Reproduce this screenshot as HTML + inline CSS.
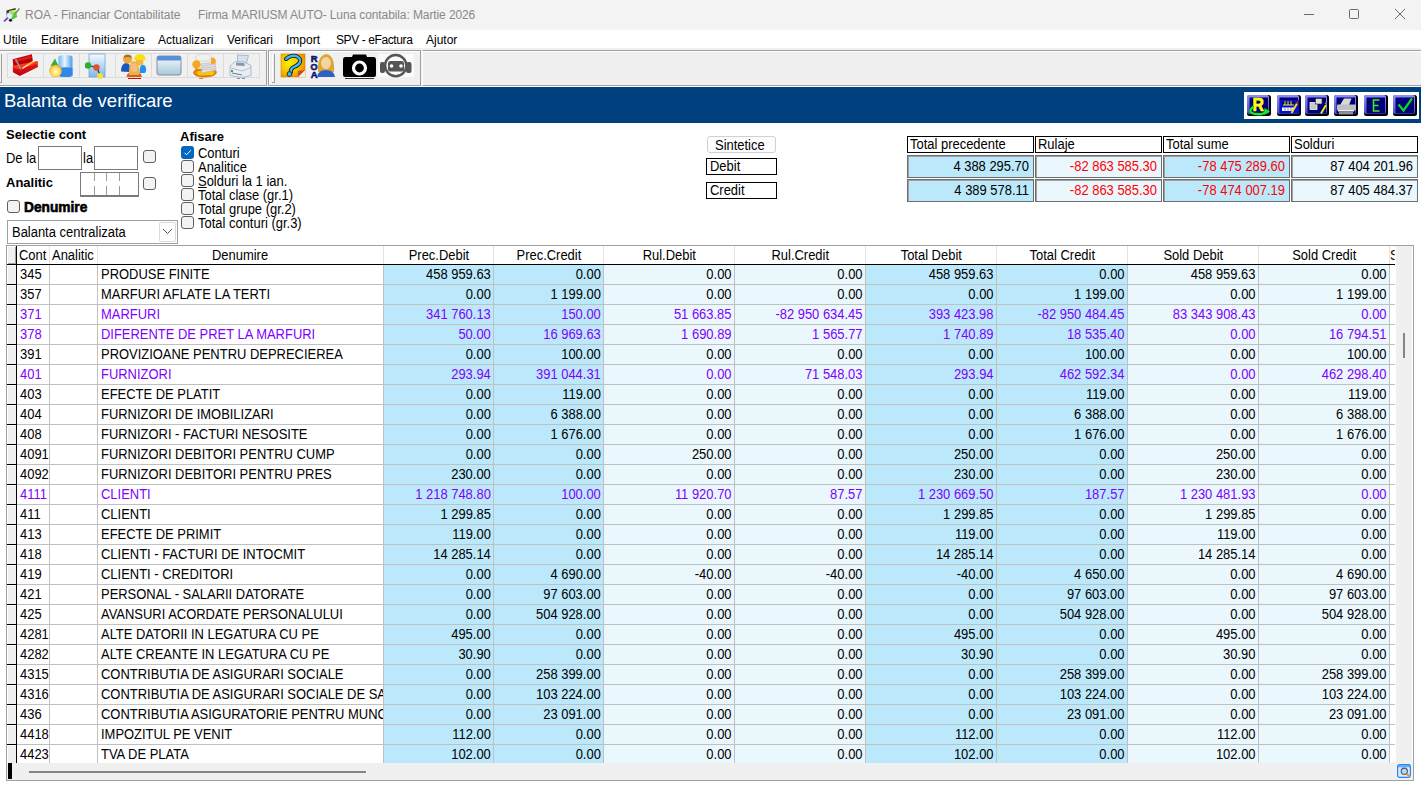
<!DOCTYPE html>
<html><head><meta charset="utf-8"><style>
*{margin:0;padding:0;box-sizing:border-box}
html,body{width:1421px;height:789px;overflow:hidden;background:#fff;font-family:"Liberation Sans",sans-serif;font-size:13px;color:#000}
.a{position:absolute}
.t{position:absolute;white-space:nowrap;line-height:16px}
.s14{font-size:14px;transform:scaleX(0.925);transform-origin:0 0}
.s14r{font-size:14px;transform:scaleX(0.925);transform-origin:100% 0}
.cell{position:absolute;white-space:nowrap;overflow:hidden;height:19px;line-height:19px}
.r{text-align:right;padding-right:2px}
.l{padding-left:3px}
.p{color:#8000ff}
.sc{position:absolute;white-space:nowrap;overflow:hidden;font-size:14px;transform:scaleX(0.925)}
.hd{position:absolute;height:18px;line-height:20px;text-align:center;white-space:nowrap;overflow:hidden}
.cb{position:absolute;width:13px;height:13px;border:1px solid #5f5f5f;border-radius:3px;background:#f3f3f3}
</style></head><body>

<div class="a" style="left:0;top:0;width:1421px;height:30px;background:#f3f3f3"></div>
<svg class="a" style="left:0;top:0" width="24" height="30" viewBox="0 0 24 30">
<defs><linearGradient id="tig" x1="0" y1="0" x2="0" y2="1"><stop offset="0" stop-color="#e8f870"/><stop offset="0.5" stop-color="#60e020"/><stop offset="1" stop-color="#20c020"/></linearGradient></defs>
<path d="M6.5 10.5 L15.5 8 L16 10 L9 11.5 L8.5 17 L6.5 15 Z" fill="#333"/>
<path d="M9 11 L16 9.5 L17.2 17 L12 19.5 L9 17 Z" fill="url(#tig)"/>
<path d="M14.5 14.5 L19.5 8.5" stroke="#808080" stroke-width="1.4"/>
<ellipse cx="10.5" cy="20.3" rx="1.6" ry="1.4" fill="#111"/>
<circle cx="9.5" cy="15.8" r="3" fill="#e8f0ff" stroke="#a8b8d8" stroke-width="0.7"/>
<path d="M4.5 20.8 L7.3 18.3" stroke="#7040c0" stroke-width="1.8" stroke-linecap="round"/>
</svg>
<div class="t" style="left:25px;top:7px;font-size:12px;color:#898989">ROA - Financiar Contabilitate</div>
<div class="t" style="left:198px;top:7px;font-size:12px;color:#898989;letter-spacing:-0.1px">Firma MARIUSM AUTO- Luna contabila: Martie 2026</div>
<div class="a" style="left:1304px;top:14px;width:10px;height:1px;background:#6a6a6a"></div>
<div class="a" style="left:1349px;top:9px;width:10px;height:10px;border:1px solid #6a6a6a;border-radius:1.5px"></div>
<svg class="a" style="left:1394px;top:8px" width="13" height="13" viewBox="0 0 13 13"><path d="M1 1 L11 11 M11 1 L1 11" stroke="#6a6a6a" stroke-width="1"/></svg>
<div class="t" style="left:3px;top:32px;font-size:12px;letter-spacing:0">Utile</div>
<div class="t" style="left:41px;top:32px;font-size:12px;letter-spacing:0">Editare</div>
<div class="t" style="left:91px;top:32px;font-size:12px;letter-spacing:0">Initializare</div>
<div class="t" style="left:158px;top:32px;font-size:12px;letter-spacing:0">Actualizari</div>
<div class="t" style="left:227px;top:32px;font-size:12px;letter-spacing:0">Verificari</div>
<div class="t" style="left:286px;top:32px;font-size:12px;letter-spacing:0">Import</div>
<div class="t" style="left:336px;top:32px;font-size:12px;letter-spacing:-0.4px">SPV - eFactura</div>
<div class="t" style="left:426px;top:32px;font-size:12px;letter-spacing:0">Ajutor</div>
<div class="a" style="left:0;top:48px;width:1421px;height:39px;background:#f0f0f0"></div>
<div class="a" style="left:-2px;top:50px;width:269px;height:36px;border:1px solid #a0a0a0;box-shadow:inset 1px 1px 0 #fff"></div>
<div class="a" style="left:268px;top:50px;width:153px;height:36px;border:1px solid #a0a0a0;box-shadow:inset 1px 1px 0 #fff"></div>
<div class="a" style="left:422px;top:50px;width:1010px;height:36px;border:1px solid #a0a0a0;border-left:1px solid #fff;box-shadow:inset 0 1px 0 #fff"></div>
<div class="a" style="left:0px;top:54px;width:2px;height:29px;border-right:1px solid #a0a0a0;border-bottom:1px solid #a0a0a0"></div>
<div class="a" style="left:272px;top:54px;width:3px;height:29px;border-right:1px solid #a0a0a0;border-bottom:1px solid #a0a0a0;box-shadow:inset 1px 0 0 #fff"></div>
<div class="a" style="left:7px;top:53px;width:37px;height:25px;border:1px solid #dcdcdc"></div>
<div class="a" style="left:43px;top:53px;width:37px;height:25px;border:1px solid #dcdcdc"></div>
<div class="a" style="left:79px;top:53px;width:37px;height:25px;border:1px solid #dcdcdc"></div>
<div class="a" style="left:115px;top:53px;width:37px;height:25px;border:1px solid #dcdcdc"></div>
<div class="a" style="left:151px;top:53px;width:37px;height:25px;border:1px solid #dcdcdc"></div>
<div class="a" style="left:187px;top:53px;width:37px;height:25px;border:1px solid #dcdcdc"></div>
<div class="a" style="left:223px;top:53px;width:37px;height:25px;border:1px solid #dcdcdc"></div>
<div class="a" style="left:0;top:86px;width:1421px;height:1px;background:#fff"></div>
<svg class="a" style="left:0;top:48px" width="421" height="38" viewBox="0 48 421 38">
<defs>
<linearGradient id="tbred" x1="0" y1="0" x2="0" y2="1"><stop offset="0" stop-color="#e8201c"/><stop offset="1" stop-color="#c00010"/></linearGradient>
<linearGradient id="cyl" x1="0" y1="0" x2="1" y2="0"><stop offset="0" stop-color="#6fb4f4"/><stop offset="0.45" stop-color="#e8f6ff"/><stop offset="1" stop-color="#4a9de8"/></linearGradient>
<radialGradient id="sph" cx="0.5" cy="0.55" r="0.55"><stop offset="0" stop-color="#fffbd0"/><stop offset="0.6" stop-color="#ffe060"/><stop offset="1" stop-color="#f59a20"/></radialGradient>
<linearGradient id="doc" x1="0" y1="0" x2="0" y2="1"><stop offset="0" stop-color="#f4fbff"/><stop offset="1" stop-color="#7db8ea"/></linearGradient>
<linearGradient id="win" x1="0" y1="0" x2="0" y2="1"><stop offset="0" stop-color="#f4fbff"/><stop offset="1" stop-color="#a8c8d8"/></linearGradient>
<radialGradient id="qbg" cx="0.35" cy="0.4" r="0.75"><stop offset="0" stop-color="#f8f000"/><stop offset="0.55" stop-color="#f6c000"/><stop offset="1" stop-color="#e88000"/></radialGradient>
</defs>
<!-- toolbox -->
<path d="M12.7 59.2 L31.9 54.2 L33 62 L13.4 67.4 Z" fill="#b8000a"/>
<path d="M14 60 L31 55.5 L31.8 58 L14.5 62.5 Z" fill="#e01818"/>
<path d="M12.9 65.8 L37.5 61.3 L38 66.9 L19.8 75.9 L12.9 72.2 Z" fill="url(#tbred)"/>
<path d="M12.9 65.8 L37.5 61.3 L37.8 63.5 L19 69 L13 68 Z" fill="#ff3a1a"/>
<path d="M15.6 59.2 L20.8 69.5" stroke="#9a9a9a" stroke-width="1.5"/>
<path d="M22.4 68.5 L36.7 59" stroke="#f4f4f4" stroke-width="1.4"/>
<path d="M27.7 65.3 L33 62.1" stroke="#f0b800" stroke-width="1.6"/>
<!-- shapes -->
<path d="M58.5 57 Q58.5 55 65.5 55 Q72.5 55 72.5 57 L72.5 75.5 Q71 77 65.5 77 Q60 77 58.5 75.5 Z" fill="url(#cyl)"/>
<path d="M58.5 68 Q65.5 66.5 72.5 68 L72.5 75.5 Q71 77 65.5 77 Q60 77 58.5 75.5 Z" fill="#2f88e8"/>
<path d="M50.5 66 L55 58.5 L58.5 66 Z" fill="#30b030"/>
<circle cx="55.5" cy="71" r="6.3" fill="url(#sph)"/>
<!-- molecule doc -->
<rect x="89" y="54" width="16" height="23" fill="url(#doc)" stroke="#6aa8e0" stroke-width="0.8"/>
<line x1="88" y1="65" x2="97" y2="68" stroke="#333" stroke-width="1.2"/>
<line x1="97" y1="68" x2="100" y2="75" stroke="#333" stroke-width="1.2"/>
<circle cx="88" cy="65.5" r="3.2" fill="#2cb02c"/>
<circle cx="96.5" cy="67.5" r="3.2" fill="#e0502c"/>
<circle cx="100" cy="76" r="3" fill="#f0e040"/>
<!-- people -->
<path d="M121 71.5 Q121 63.5 126 63 Q130 63 130 68 L129 72 Z" fill="#1a58c0"/>
<path d="M139.5 73 Q139 65 143 64.8 Q146.5 65 146 71 L145 73 Z" fill="#2290f0"/>
<circle cx="127.6" cy="59" r="4.6" fill="#f0a830"/>
<path d="M124 56 Q127 53.5 131.5 56 L131 58 Q128 56 124 58 Z" fill="#a07030"/>
<circle cx="139.7" cy="62" r="3.8" fill="#f4b840"/>
<path d="M134 60 Q134 54.2 139.8 54.2 Q145.8 54.2 145.8 60 Z" fill="#f8e010"/>
<path d="M126.5 77 Q127 71.5 134 71.5 Q141 71.5 142 77 Z" fill="#e05a10"/>
<path d="M129 75 Q128.5 61.3 134 61.3 Q139.5 61.3 139.2 75 Z" fill="#e8b050"/>
<ellipse cx="134" cy="67.5" rx="3.5" ry="4.5" fill="#f7c070"/>
<rect x="128" y="78" width="13" height="1" fill="#c01010"/>
<!-- window -->
<rect x="157" y="56" width="24" height="19" rx="2" fill="url(#win)" stroke="#707888" stroke-width="0.8"/>
<rect x="157" y="56" width="24" height="4.5" rx="1.5" fill="#5b8ed8"/>
<!-- fax/money -->
<path d="M193 73 Q194 68 203 69 Q215 68 217 72 Q216 77 205 77.5 Q195 77.5 193 73 Z" fill="#e07a18"/>
<path d="M195 72 Q204 69.5 215 71.5 L213 75 L199 75.5 Z" fill="#f8c800"/>
<path d="M201 64 L215 62 L216 70 L202 73 Z" fill="#e4e4e4" stroke="#a8a8a8" stroke-width="0.5"/>
<path d="M202 66 L215 64 M202 68 L215 66.5 M202 70 L215 68.5" stroke="#b0b0b0" stroke-width="0.6"/>
<path d="M195 57 Q198 53 205 54 Q211 53 211 57 L209 61 L197 61 Z" fill="#f0f0f0" stroke="#c8c8c8" stroke-width="0.6"/>
<circle cx="196.5" cy="64.5" r="4.2" fill="#f8a820"/>
<path d="M196 68 L197 73" stroke="#d89000" stroke-width="1.5"/>
<path d="M211 58 A3.2 3.2 0 0 1 214 64 L211 64 Z" fill="#f8a820"/>
<rect x="199" y="78" width="4" height="1" fill="#e08030"/>
<!-- printer -->
<path d="M237.5 55 L248.5 55.5 L246.5 63 L237.5 63 Z" fill="#d4e2f0" stroke="#8a9ab4" stroke-width="0.6"/>
<path d="M230 66 L235.5 61.5 L244 62 L251 65.5 L251 75.5 L241.5 77.5 L230 75.5 Z" fill="#e8eef4" stroke="#98a4bc" stroke-width="0.7"/>
<path d="M236 62.5 L244 63 L245 66 L236 65.5 Z" fill="#8a96a8"/>
<path d="M231 68 L242 71 L251 67.5" stroke="#a0aabb" stroke-width="0.7" fill="none"/>
<path d="M232 73 L242 75" stroke="#707a88" stroke-width="1"/>
<rect x="231" y="70" width="2" height="2" fill="#20c020"/>
<rect x="237" y="78" width="3" height="1" fill="#8090b0"/><rect x="242" y="78" width="3" height="1" fill="#8090b0"/>
<!-- group2 ? -->
<rect x="281" y="54" width="24" height="23" fill="url(#qbg)" stroke="#d88000" stroke-width="0.6"/>
<path d="M298 77 L305 70 L305 77 Z" fill="#f0f0f0"/>
<path d="M298 77 L298 71 L305 70 Z" fill="#c0502a"/>
<path d="M286 59 Q290 55 296 56 Q301 58 300 62 Q299 65 294 67 Q290 69 291 72" stroke="#111" stroke-width="4" fill="none" stroke-linecap="round"/>
<path d="M286 59 Q290 55 296 56 Q301 58 300 62 Q299 65 294 67 Q290 69 291 72" stroke="#3cb8f8" stroke-width="2.4" fill="none" stroke-linecap="round"/>
<circle cx="289.5" cy="74" r="2.4" fill="#3cb8f8" stroke="#111" stroke-width="0.8"/>
<!-- ROA person -->
<text x="0" y="0" font-family="Liberation Sans" font-weight="bold" font-size="10" fill="#0a1470" stroke="#0a1470" stroke-width="0.6" transform="translate(310.8 61.5) scale(0.95 0.9)">R</text>
<text x="0" y="0" font-family="Liberation Sans" font-weight="bold" font-size="10" fill="#0a1470" stroke="#0a1470" stroke-width="0.6" transform="translate(310.5 69.5) scale(0.9 0.9)">O</text>
<text x="0" y="0" font-family="Liberation Sans" font-weight="bold" font-size="10" fill="#0a1470" stroke="#0a1470" stroke-width="0.6" transform="translate(310.8 77.5) scale(0.95 0.9)">A</text>
<path d="M318 72 Q317 56 326 54 Q335 55 334 72 Z" fill="#d8a830"/>
<ellipse cx="326" cy="63" rx="5" ry="6" fill="#f4d4a4"/>
<path d="M317 77 Q318 70 326 70 Q334 70 335 77 Z" fill="#2f60c8"/>
<!-- camera -->
<path d="M352 57 L353 54.5 L366 54.5 L367 57 L374 57 Q376 57 376 59.5 L376 75 Q376 77 374 77 L345 77 Q343 77 343 75 L343 59.5 Q343 57 345 57 Z" fill="#000"/>
<circle cx="359.5" cy="68" r="6" fill="none" stroke="#fff" stroke-width="3.2"/>
<rect x="345" y="78" width="29" height="1" fill="#333"/>
<!-- robot -->
<rect x="378" y="54" width="36" height="23" fill="#fafafa"/>
<circle cx="395.7" cy="65.6" r="10.6" fill="none" stroke="#555" stroke-width="2.4"/>
<rect x="380" y="62" width="5" height="11" rx="2" fill="#555"/>
<rect x="406" y="62" width="5.5" height="11" rx="2" fill="#555"/>
<rect x="388" y="61" width="16" height="10.5" rx="2.5" fill="#555"/>
<circle cx="391.5" cy="66" r="1.8" fill="#fff"/>
<circle cx="401" cy="66" r="1.8" fill="#fff"/>
</svg>

<div class="a" style="left:0;top:87px;width:1421px;height:36px;background:#00407f"></div>
<div class="t" style="left:4px;top:90px;font-size:18.5px;line-height:22px;color:#fff">Balanta de verificare</div>
<div class="a" style="left:1244px;top:92px;width:175px;height:27px;background:#fff"></div>
<svg class="a" style="left:1244px;top:92px" width="175" height="27" viewBox="1244 92 175 27">
<defs>
<linearGradient id="hbv" x1="0" y1="0" x2="0" y2="1"><stop offset="0" stop-color="#9090f0"/><stop offset="1" stop-color="#5050c8"/></linearGradient>
</defs>
<g id="hbtns"></g>
<rect x="1247" y="95" width="24" height="21" rx="2.5" fill="#000"/>
<rect x="1247" y="95" width="22" height="19" rx="2" fill="url(#hbv)"/>
<rect x="1249.5" y="97.5" width="18.5" height="16" fill="#000078"/>
<rect x="1277" y="95" width="24" height="21" rx="2.5" fill="#000"/>
<rect x="1277" y="95" width="22" height="19" rx="2" fill="url(#hbv)"/>
<rect x="1279.5" y="97.5" width="18.5" height="16" fill="#000078"/>
<rect x="1305" y="95" width="24" height="21" rx="2.5" fill="#000"/>
<rect x="1305" y="95" width="22" height="19" rx="2" fill="url(#hbv)"/>
<rect x="1307.5" y="97.5" width="18.5" height="16" fill="#000078"/>
<rect x="1334" y="95" width="24" height="21" rx="2.5" fill="#000"/>
<rect x="1334" y="95" width="22" height="19" rx="2" fill="url(#hbv)"/>
<rect x="1336.5" y="97.5" width="18.5" height="16" fill="#000078"/>
<rect x="1364" y="95" width="24" height="21" rx="2.5" fill="#000"/>
<rect x="1364" y="95" width="22" height="19" rx="2" fill="url(#hbv)"/>
<rect x="1366.5" y="97.5" width="18.5" height="16" fill="#000078"/>
<rect x="1393" y="95" width="24" height="21" rx="2.5" fill="#000"/>
<rect x="1393" y="95" width="22" height="19" rx="2" fill="url(#hbv)"/>
<rect x="1395.5" y="97.5" width="18.5" height="16" fill="#000078"/>

<!-- R -->
<text x="0" y="0" font-family="Liberation Sans" font-weight="bold" font-size="18" fill="#ffff00" stroke="#ffff00" stroke-width="0.7" transform="translate(1252.5 110.8) scale(0.88 0.97)">R</text>
<path d="M1254 106.5 Q1249 109.5 1251 112.5 Q1255 115 1262 114 Q1265.5 113.2 1266.5 111.5" stroke="#10f020" stroke-width="2.4" fill="none"/>
<path d="M1264.5 108 L1270 111.5 L1264 115 Z" fill="#10f020"/>
<!-- grid edit -->
<rect x="1280" y="100" width="19" height="13" fill="#0010e0"/>
<rect x="1282" y="101" width="13" height="5" fill="#101040"/>
<path d="M1283 105 L1294 105 M1285 101 L1285 105 M1288 101 L1288 105 M1291 101 L1291 105" stroke="#f8f0b0" stroke-width="0.9"/>
<rect x="1282" y="107.5" width="12" height="3.5" fill="#fff"/>
<path d="M1285 107.5 L1285 111 M1288 107.5 L1288 111 M1291 107.5 L1291 111" stroke="#806020" stroke-width="0.7"/>
<path d="M1291.5 113 L1297 103.5" stroke="#f0e020" stroke-width="2"/>
<path d="M1296.5 103.5 L1298 101.5" stroke="#e01010" stroke-width="1.5"/>
<!-- windows edit -->
<rect x="1310" y="102.5" width="7" height="7" fill="#c8c8c8" stroke="#f0f0f0" stroke-width="0.8"/>
<rect x="1315.5" y="98.5" width="6.5" height="5.5" fill="#e0e0e0" stroke="#222" stroke-width="0.6"/>
<path d="M1321 113.5 L1326 105" stroke="#f0e800" stroke-width="2"/>
<path d="M1325 104 L1327 101" stroke="#b0b0b0" stroke-width="0.8"/>
<!-- printer -->
<path d="M1340 105 L1344 98.5 L1351.5 98.5 L1349 105 Z" fill="#d8d8d8"/>
<rect x="1337" y="104.5" width="19" height="6" rx="1" fill="#c0c0c0"/>
<rect x="1338" y="110" width="16" height="1.5" fill="#f0f0f0"/>
<rect x="1339" y="111.5" width="14" height="3" fill="#909090"/>
<!-- E -->
<path d="M1379.5 100 L1373.5 100 L1373.5 111 L1379.5 111 M1373.5 105.5 L1378.5 105.5" stroke="#40f010" stroke-width="1.6" fill="none"/>
<!-- check -->
<path d="M1398.5 104.5 L1403.5 110.5 L1412 98.5" stroke="#00e020" stroke-width="2.2" fill="none"/>
</svg>

<div class="t" style="left:6px;top:127px;font-weight:bold">Selectie cont</div>
<div class="t s14" style="left:6px;top:150px">De la</div>
<div class="a" style="left:38px;top:146px;width:44px;height:24px;border:1px solid #7a7a7a;background:#fff"></div>
<div class="t s14" style="left:83px;top:150px">la</div>
<div class="a" style="left:94px;top:146px;width:44px;height:24px;border:1px solid #7a7a7a;background:#fff"></div>
<div class="cb" style="left:143px;top:150px"></div>
<div class="t" style="left:6px;top:175px;font-weight:bold">Analitic</div>
<div class="a" style="left:80px;top:172px;width:59px;height:25px;border:1px solid #7a7a7a;border-bottom:2px solid #7a7a7a;background:#fff"></div>
<div class="a" style="left:94px;top:173px;width:1px;height:8px;background:#9a9a9a"></div>
<div class="a" style="left:94px;top:186px;width:1px;height:9px;background:#9a9a9a"></div>
<div class="a" style="left:106px;top:173px;width:1px;height:8px;background:#9a9a9a"></div>
<div class="a" style="left:106px;top:186px;width:1px;height:9px;background:#9a9a9a"></div>
<div class="a" style="left:119px;top:173px;width:1px;height:8px;background:#9a9a9a"></div>
<div class="a" style="left:119px;top:186px;width:1px;height:9px;background:#9a9a9a"></div>
<div class="cb" style="left:143px;top:177px"></div>
<div class="cb" style="left:7px;top:200px"></div>
<div class="t" style="left:24px;top:199px;font-weight:bold;font-size:14px;-webkit-text-stroke:0.6px #000;transform:scaleX(0.98);transform-origin:0 0">Denumire</div>
<div class="a" style="left:7px;top:220px;width:171px;height:24px;border:1px solid #a0a0a0;background:#fff"></div>
<div class="t s14" style="left:12px;top:224px">Balanta centralizata</div>
<div class="a" style="left:159px;top:222px;width:17px;height:20px;border:1px solid #dadada;border-radius:2px;background:#fff"></div>
<svg class="a" style="left:162px;top:228px" width="11" height="7" viewBox="0 0 11 7"><path d="M1 1 L5.5 5.5 L10 1" stroke="#555" fill="none" stroke-width="1"/></svg>
<div class="t" style="left:180px;top:129px;font-weight:bold">Afisare</div>
<div class="a" style="left:181px;top:146px;width:13px;height:13px;background:#0067c0;border-radius:3px"></div>
<svg class="a" style="left:181px;top:146px" width="13" height="13" viewBox="0 0 13 13"><path d="M3.5 6.8 L5.5 8.8 L9.8 4.3" stroke="#fff" fill="none" stroke-width="1"/></svg>
<div class="t s14" style="left:198px;top:145px">Conturi</div>
<div class="cb" style="left:181px;top:160px"></div>
<div class="t s14" style="left:198px;top:159px">Analitice</div>
<div class="cb" style="left:181px;top:174px"></div>
<div class="t s14" style="left:198px;top:173px"><u>S</u>olduri la 1 ian.</div>
<div class="cb" style="left:181px;top:188px"></div>
<div class="t s14" style="left:198px;top:187px">Total clase (gr.1)</div>
<div class="cb" style="left:181px;top:202px"></div>
<div class="t s14" style="left:198px;top:201px">Total grupe (gr.2)</div>
<div class="cb" style="left:181px;top:216px"></div>
<div class="t s14" style="left:198px;top:215px">Total conturi (gr.3)</div>
<div class="a" style="left:707px;top:136px;width:69px;height:17px;border:1px solid #d0d0d0;border-radius:3px;background:#fdfdfd"></div>
<div class="t s14" style="left:715px;top:137px">Sintetice</div>
<div class="a" style="left:706px;top:158px;width:71px;height:17px;border:1px solid #000"></div>
<div class="t s14" style="left:710px;top:158px">Debit</div>
<div class="a" style="left:706px;top:182px;width:71px;height:17px;border:1px solid #000"></div>
<div class="t s14" style="left:710px;top:182px">Credit</div>
<div class="a" style="left:907px;top:136px;width:127px;height:17px;border:1px solid #000;background:#fff"></div>
<div class="t s14" style="left:910px;top:136px">Total precedente</div>
<div class="a" style="left:907px;top:155px;width:127px;height:23px;border:1px solid #6e6e6e;background:#bbe9fb;box-shadow:inset 1px 1px 0 #a0a0a0"></div>
<div class="t s14r" style="left:907px;top:158px;width:122px;text-align:right;color:#000">4 388 295.70</div>
<div class="a" style="left:907px;top:179px;width:127px;height:23px;border:1px solid #6e6e6e;background:#bbe9fb;box-shadow:inset 1px 1px 0 #a0a0a0"></div>
<div class="t s14r" style="left:907px;top:182px;width:122px;text-align:right;color:#000">4 389 578.11</div>
<div class="a" style="left:1035px;top:136px;width:127px;height:17px;border:1px solid #000;background:#fff"></div>
<div class="t s14" style="left:1038px;top:136px">Rulaje</div>
<div class="a" style="left:1035px;top:155px;width:127px;height:23px;border:1px solid #6e6e6e;background:#eaf8fe;box-shadow:inset 1px 1px 0 #a0a0a0"></div>
<div class="t s14r" style="left:1035px;top:158px;width:122px;text-align:right;color:#f00">-82 863 585.30</div>
<div class="a" style="left:1035px;top:179px;width:127px;height:23px;border:1px solid #6e6e6e;background:#eaf8fe;box-shadow:inset 1px 1px 0 #a0a0a0"></div>
<div class="t s14r" style="left:1035px;top:182px;width:122px;text-align:right;color:#f00">-82 863 585.30</div>
<div class="a" style="left:1163px;top:136px;width:127px;height:17px;border:1px solid #000;background:#fff"></div>
<div class="t s14" style="left:1166px;top:136px">Total sume</div>
<div class="a" style="left:1163px;top:155px;width:127px;height:23px;border:1px solid #6e6e6e;background:#bbe9fb;box-shadow:inset 1px 1px 0 #a0a0a0"></div>
<div class="t s14r" style="left:1163px;top:158px;width:122px;text-align:right;color:#f00">-78 475 289.60</div>
<div class="a" style="left:1163px;top:179px;width:127px;height:23px;border:1px solid #6e6e6e;background:#bbe9fb;box-shadow:inset 1px 1px 0 #a0a0a0"></div>
<div class="t s14r" style="left:1163px;top:182px;width:122px;text-align:right;color:#f00">-78 474 007.19</div>
<div class="a" style="left:1291px;top:136px;width:127px;height:17px;border:1px solid #000;background:#fff"></div>
<div class="t s14" style="left:1294px;top:136px">Solduri</div>
<div class="a" style="left:1291px;top:155px;width:127px;height:23px;border:1px solid #6e6e6e;background:#eaf8fe;box-shadow:inset 1px 1px 0 #a0a0a0"></div>
<div class="t s14r" style="left:1291px;top:158px;width:122px;text-align:right;color:#000">87 404 201.96</div>
<div class="a" style="left:1291px;top:179px;width:127px;height:23px;border:1px solid #6e6e6e;background:#eaf8fe;box-shadow:inset 1px 1px 0 #a0a0a0"></div>
<div class="t s14r" style="left:1291px;top:182px;width:122px;text-align:right;color:#000">87 405 484.37</div>
<div class="a" style="left:6px;top:245px;width:1408px;height:536px;border:1px solid #a0a0a0;background:#fff"></div>
<div class="a" style="left:384px;top:265px;width:109px;height:498px;background:#bbe9fb"></div>
<div class="a" style="left:494px;top:265px;width:109px;height:498px;background:#bbe9fb"></div>
<div class="a" style="left:604px;top:265px;width:130px;height:498px;background:#eaf8fe"></div>
<div class="a" style="left:735px;top:265px;width:130px;height:498px;background:#eaf8fe"></div>
<div class="a" style="left:866px;top:265px;width:130px;height:498px;background:#bbe9fb"></div>
<div class="a" style="left:997px;top:265px;width:130px;height:498px;background:#bbe9fb"></div>
<div class="a" style="left:1128px;top:265px;width:130px;height:498px;background:#eaf8fe"></div>
<div class="a" style="left:1259px;top:265px;width:130px;height:498px;background:#eaf8fe"></div>
<div class="a" style="left:17px;top:284px;width:1378px;height:1px;background:#c0c0c0"></div>
<div class="a" style="left:17px;top:304px;width:1378px;height:1px;background:#c0c0c0"></div>
<div class="a" style="left:17px;top:324px;width:1378px;height:1px;background:#c0c0c0"></div>
<div class="a" style="left:17px;top:344px;width:1378px;height:1px;background:#c0c0c0"></div>
<div class="a" style="left:17px;top:364px;width:1378px;height:1px;background:#c0c0c0"></div>
<div class="a" style="left:17px;top:384px;width:1378px;height:1px;background:#c0c0c0"></div>
<div class="a" style="left:17px;top:404px;width:1378px;height:1px;background:#c0c0c0"></div>
<div class="a" style="left:17px;top:424px;width:1378px;height:1px;background:#c0c0c0"></div>
<div class="a" style="left:17px;top:444px;width:1378px;height:1px;background:#c0c0c0"></div>
<div class="a" style="left:17px;top:464px;width:1378px;height:1px;background:#c0c0c0"></div>
<div class="a" style="left:17px;top:484px;width:1378px;height:1px;background:#c0c0c0"></div>
<div class="a" style="left:17px;top:504px;width:1378px;height:1px;background:#c0c0c0"></div>
<div class="a" style="left:17px;top:524px;width:1378px;height:1px;background:#c0c0c0"></div>
<div class="a" style="left:17px;top:544px;width:1378px;height:1px;background:#c0c0c0"></div>
<div class="a" style="left:17px;top:564px;width:1378px;height:1px;background:#c0c0c0"></div>
<div class="a" style="left:17px;top:584px;width:1378px;height:1px;background:#c0c0c0"></div>
<div class="a" style="left:17px;top:604px;width:1378px;height:1px;background:#c0c0c0"></div>
<div class="a" style="left:17px;top:624px;width:1378px;height:1px;background:#c0c0c0"></div>
<div class="a" style="left:17px;top:644px;width:1378px;height:1px;background:#c0c0c0"></div>
<div class="a" style="left:17px;top:664px;width:1378px;height:1px;background:#c0c0c0"></div>
<div class="a" style="left:17px;top:684px;width:1378px;height:1px;background:#c0c0c0"></div>
<div class="a" style="left:17px;top:704px;width:1378px;height:1px;background:#c0c0c0"></div>
<div class="a" style="left:17px;top:724px;width:1378px;height:1px;background:#c0c0c0"></div>
<div class="a" style="left:17px;top:744px;width:1378px;height:1px;background:#c0c0c0"></div>
<div class="a" style="left:49px;top:265px;width:1px;height:498px;background:#c0c0c0"></div>
<div class="a" style="left:49px;top:246px;width:1px;height:18px;background:#e3e3e3"></div>
<div class="a" style="left:97px;top:265px;width:1px;height:498px;background:#c0c0c0"></div>
<div class="a" style="left:97px;top:246px;width:1px;height:18px;background:#e3e3e3"></div>
<div class="a" style="left:383px;top:265px;width:1px;height:498px;background:#c0c0c0"></div>
<div class="a" style="left:383px;top:246px;width:1px;height:18px;background:#e3e3e3"></div>
<div class="a" style="left:493px;top:265px;width:1px;height:498px;background:#c0c0c0"></div>
<div class="a" style="left:493px;top:246px;width:1px;height:18px;background:#e3e3e3"></div>
<div class="a" style="left:603px;top:265px;width:1px;height:498px;background:#c0c0c0"></div>
<div class="a" style="left:603px;top:246px;width:1px;height:18px;background:#e3e3e3"></div>
<div class="a" style="left:734px;top:265px;width:1px;height:498px;background:#c0c0c0"></div>
<div class="a" style="left:734px;top:246px;width:1px;height:18px;background:#e3e3e3"></div>
<div class="a" style="left:865px;top:265px;width:1px;height:498px;background:#c0c0c0"></div>
<div class="a" style="left:865px;top:246px;width:1px;height:18px;background:#e3e3e3"></div>
<div class="a" style="left:996px;top:265px;width:1px;height:498px;background:#c0c0c0"></div>
<div class="a" style="left:996px;top:246px;width:1px;height:18px;background:#e3e3e3"></div>
<div class="a" style="left:1127px;top:265px;width:1px;height:498px;background:#c0c0c0"></div>
<div class="a" style="left:1127px;top:246px;width:1px;height:18px;background:#e3e3e3"></div>
<div class="a" style="left:1258px;top:265px;width:1px;height:498px;background:#c0c0c0"></div>
<div class="a" style="left:1258px;top:246px;width:1px;height:18px;background:#e3e3e3"></div>
<div class="a" style="left:1389px;top:265px;width:1px;height:498px;background:#c0c0c0"></div>
<div class="a" style="left:1389px;top:246px;width:1px;height:18px;background:#e3e3e3"></div>
<div class="a" style="left:7px;top:246px;width:9px;height:517px;background:#f0f0f0"></div>
<div class="a" style="left:16px;top:246px;width:1px;height:517px;background:#000"></div>
<div class="a" style="left:7px;top:246px;width:1px;height:517px;background:#fff"></div>
<div class="a" style="left:7px;top:284px;width:9px;height:1px;background:#000"></div>
<div class="a" style="left:8px;top:285px;width:8px;height:1px;background:#fff"></div>
<div class="a" style="left:7px;top:304px;width:9px;height:1px;background:#000"></div>
<div class="a" style="left:8px;top:305px;width:8px;height:1px;background:#fff"></div>
<div class="a" style="left:7px;top:324px;width:9px;height:1px;background:#000"></div>
<div class="a" style="left:8px;top:325px;width:8px;height:1px;background:#fff"></div>
<div class="a" style="left:7px;top:344px;width:9px;height:1px;background:#000"></div>
<div class="a" style="left:8px;top:345px;width:8px;height:1px;background:#fff"></div>
<div class="a" style="left:7px;top:364px;width:9px;height:1px;background:#000"></div>
<div class="a" style="left:8px;top:365px;width:8px;height:1px;background:#fff"></div>
<div class="a" style="left:7px;top:384px;width:9px;height:1px;background:#000"></div>
<div class="a" style="left:8px;top:385px;width:8px;height:1px;background:#fff"></div>
<div class="a" style="left:7px;top:404px;width:9px;height:1px;background:#000"></div>
<div class="a" style="left:8px;top:405px;width:8px;height:1px;background:#fff"></div>
<div class="a" style="left:7px;top:424px;width:9px;height:1px;background:#000"></div>
<div class="a" style="left:8px;top:425px;width:8px;height:1px;background:#fff"></div>
<div class="a" style="left:7px;top:444px;width:9px;height:1px;background:#000"></div>
<div class="a" style="left:8px;top:445px;width:8px;height:1px;background:#fff"></div>
<div class="a" style="left:7px;top:464px;width:9px;height:1px;background:#000"></div>
<div class="a" style="left:8px;top:465px;width:8px;height:1px;background:#fff"></div>
<div class="a" style="left:7px;top:484px;width:9px;height:1px;background:#000"></div>
<div class="a" style="left:8px;top:485px;width:8px;height:1px;background:#fff"></div>
<div class="a" style="left:7px;top:504px;width:9px;height:1px;background:#000"></div>
<div class="a" style="left:8px;top:505px;width:8px;height:1px;background:#fff"></div>
<div class="a" style="left:7px;top:524px;width:9px;height:1px;background:#000"></div>
<div class="a" style="left:8px;top:525px;width:8px;height:1px;background:#fff"></div>
<div class="a" style="left:7px;top:544px;width:9px;height:1px;background:#000"></div>
<div class="a" style="left:8px;top:545px;width:8px;height:1px;background:#fff"></div>
<div class="a" style="left:7px;top:564px;width:9px;height:1px;background:#000"></div>
<div class="a" style="left:8px;top:565px;width:8px;height:1px;background:#fff"></div>
<div class="a" style="left:7px;top:584px;width:9px;height:1px;background:#000"></div>
<div class="a" style="left:8px;top:585px;width:8px;height:1px;background:#fff"></div>
<div class="a" style="left:7px;top:604px;width:9px;height:1px;background:#000"></div>
<div class="a" style="left:8px;top:605px;width:8px;height:1px;background:#fff"></div>
<div class="a" style="left:7px;top:624px;width:9px;height:1px;background:#000"></div>
<div class="a" style="left:8px;top:625px;width:8px;height:1px;background:#fff"></div>
<div class="a" style="left:7px;top:644px;width:9px;height:1px;background:#000"></div>
<div class="a" style="left:8px;top:645px;width:8px;height:1px;background:#fff"></div>
<div class="a" style="left:7px;top:664px;width:9px;height:1px;background:#000"></div>
<div class="a" style="left:8px;top:665px;width:8px;height:1px;background:#fff"></div>
<div class="a" style="left:7px;top:684px;width:9px;height:1px;background:#000"></div>
<div class="a" style="left:8px;top:685px;width:8px;height:1px;background:#fff"></div>
<div class="a" style="left:7px;top:704px;width:9px;height:1px;background:#000"></div>
<div class="a" style="left:8px;top:705px;width:8px;height:1px;background:#fff"></div>
<div class="a" style="left:7px;top:724px;width:9px;height:1px;background:#000"></div>
<div class="a" style="left:8px;top:725px;width:8px;height:1px;background:#fff"></div>
<div class="a" style="left:7px;top:744px;width:9px;height:1px;background:#000"></div>
<div class="a" style="left:8px;top:745px;width:8px;height:1px;background:#fff"></div>
<div class="a" style="left:8px;top:246px;width:8px;height:1px;background:#fff"></div>
<div class="a" style="left:8px;top:265px;width:8px;height:1px;background:#fff"></div>
<div class="a" style="left:7px;top:264px;width:1388px;height:1px;background:#000"></div>
<div class="a" style="left:15px;top:247px;width:1px;height:17px;background:#a0a0a0"></div>
<div class="a" style="left:8px;top:263px;width:8px;height:1px;background:#a0a0a0"></div>
<div class="sc " style="left:17px;top:246px;width:34.59px;height:18px;line-height:19px;text-align:left;padding-left:2.16px;transform-origin:0 0;">Cont</div>
<div class="sc " style="left:50px;top:246px;width:50.81px;height:18px;line-height:19px;text-align:left;padding-left:2.16px;transform-origin:0 0;">Analitic</div>
<div class="sc " style="left:86.45px;top:246px;width:308.11px;height:18px;line-height:19px;text-align:center;transform-origin:50% 0;">Denumire</div>
<div class="sc " style="left:379.58px;top:246px;width:117.84px;height:18px;line-height:19px;text-align:center;transform-origin:50% 0;">Prec.Debit</div>
<div class="sc " style="left:489.58px;top:246px;width:117.84px;height:18px;line-height:19px;text-align:center;transform-origin:50% 0;">Prec.Credit</div>
<div class="sc " style="left:598.73px;top:246px;width:140.54px;height:18px;line-height:19px;text-align:center;transform-origin:50% 0;">Rul.Debit</div>
<div class="sc " style="left:729.73px;top:246px;width:140.54px;height:18px;line-height:19px;text-align:center;transform-origin:50% 0;">Rul.Credit</div>
<div class="sc " style="left:860.73px;top:246px;width:140.54px;height:18px;line-height:19px;text-align:center;transform-origin:50% 0;">Total Debit</div>
<div class="sc " style="left:991.73px;top:246px;width:140.54px;height:18px;line-height:19px;text-align:center;transform-origin:50% 0;">Total Credit</div>
<div class="sc " style="left:1122.73px;top:246px;width:140.54px;height:18px;line-height:19px;text-align:center;transform-origin:50% 0;">Sold Debit</div>
<div class="sc " style="left:1253.73px;top:246px;width:140.54px;height:18px;line-height:19px;text-align:center;transform-origin:50% 0;">Sold Credit</div>
<div class="sc " style="left:1390px;top:246px;width:5.41px;height:18px;line-height:19px;text-align:left;padding-left:0.00px;transform-origin:0 0;">S</div>
<div class="sc " style="left:17px;top:265px;width:34.59px;height:19px;line-height:19px;text-align:left;padding-left:3.24px;transform-origin:0 0;">345</div>
<div class="sc " style="left:98px;top:265px;width:308.11px;height:19px;line-height:19px;text-align:left;padding-left:3.24px;transform-origin:0 0;">PRODUSE FINITE</div>
<div class="sc " style="left:375.16px;top:265px;width:117.84px;height:19px;line-height:19px;text-align:right;padding-right:2.16px;transform-origin:100% 0;">458 959.63</div>
<div class="sc " style="left:485.16px;top:265px;width:117.84px;height:19px;line-height:19px;text-align:right;padding-right:2.16px;transform-origin:100% 0;">0.00</div>
<div class="sc " style="left:593.46px;top:265px;width:140.54px;height:19px;line-height:19px;text-align:right;padding-right:2.16px;transform-origin:100% 0;">0.00</div>
<div class="sc " style="left:724.46px;top:265px;width:140.54px;height:19px;line-height:19px;text-align:right;padding-right:2.16px;transform-origin:100% 0;">0.00</div>
<div class="sc " style="left:855.46px;top:265px;width:140.54px;height:19px;line-height:19px;text-align:right;padding-right:2.16px;transform-origin:100% 0;">458 959.63</div>
<div class="sc " style="left:986.46px;top:265px;width:140.54px;height:19px;line-height:19px;text-align:right;padding-right:2.16px;transform-origin:100% 0;">0.00</div>
<div class="sc " style="left:1117.46px;top:265px;width:140.54px;height:19px;line-height:19px;text-align:right;padding-right:2.16px;transform-origin:100% 0;">458 959.63</div>
<div class="sc " style="left:1248.46px;top:265px;width:140.54px;height:19px;line-height:19px;text-align:right;padding-right:2.16px;transform-origin:100% 0;">0.00</div>
<div class="sc " style="left:17px;top:285px;width:34.59px;height:19px;line-height:19px;text-align:left;padding-left:3.24px;transform-origin:0 0;">357</div>
<div class="sc " style="left:98px;top:285px;width:308.11px;height:19px;line-height:19px;text-align:left;padding-left:3.24px;transform-origin:0 0;">MARFURI AFLATE LA TERTI</div>
<div class="sc " style="left:375.16px;top:285px;width:117.84px;height:19px;line-height:19px;text-align:right;padding-right:2.16px;transform-origin:100% 0;">0.00</div>
<div class="sc " style="left:485.16px;top:285px;width:117.84px;height:19px;line-height:19px;text-align:right;padding-right:2.16px;transform-origin:100% 0;">1 199.00</div>
<div class="sc " style="left:593.46px;top:285px;width:140.54px;height:19px;line-height:19px;text-align:right;padding-right:2.16px;transform-origin:100% 0;">0.00</div>
<div class="sc " style="left:724.46px;top:285px;width:140.54px;height:19px;line-height:19px;text-align:right;padding-right:2.16px;transform-origin:100% 0;">0.00</div>
<div class="sc " style="left:855.46px;top:285px;width:140.54px;height:19px;line-height:19px;text-align:right;padding-right:2.16px;transform-origin:100% 0;">0.00</div>
<div class="sc " style="left:986.46px;top:285px;width:140.54px;height:19px;line-height:19px;text-align:right;padding-right:2.16px;transform-origin:100% 0;">1 199.00</div>
<div class="sc " style="left:1117.46px;top:285px;width:140.54px;height:19px;line-height:19px;text-align:right;padding-right:2.16px;transform-origin:100% 0;">0.00</div>
<div class="sc " style="left:1248.46px;top:285px;width:140.54px;height:19px;line-height:19px;text-align:right;padding-right:2.16px;transform-origin:100% 0;">1 199.00</div>
<div class="sc p" style="left:17px;top:305px;width:34.59px;height:19px;line-height:19px;text-align:left;padding-left:3.24px;transform-origin:0 0;">371</div>
<div class="sc p" style="left:98px;top:305px;width:308.11px;height:19px;line-height:19px;text-align:left;padding-left:3.24px;transform-origin:0 0;">MARFURI</div>
<div class="sc p" style="left:375.16px;top:305px;width:117.84px;height:19px;line-height:19px;text-align:right;padding-right:2.16px;transform-origin:100% 0;">341 760.13</div>
<div class="sc p" style="left:485.16px;top:305px;width:117.84px;height:19px;line-height:19px;text-align:right;padding-right:2.16px;transform-origin:100% 0;">150.00</div>
<div class="sc p" style="left:593.46px;top:305px;width:140.54px;height:19px;line-height:19px;text-align:right;padding-right:2.16px;transform-origin:100% 0;">51 663.85</div>
<div class="sc p" style="left:724.46px;top:305px;width:140.54px;height:19px;line-height:19px;text-align:right;padding-right:2.16px;transform-origin:100% 0;">-82 950 634.45</div>
<div class="sc p" style="left:855.46px;top:305px;width:140.54px;height:19px;line-height:19px;text-align:right;padding-right:2.16px;transform-origin:100% 0;">393 423.98</div>
<div class="sc p" style="left:986.46px;top:305px;width:140.54px;height:19px;line-height:19px;text-align:right;padding-right:2.16px;transform-origin:100% 0;">-82 950 484.45</div>
<div class="sc p" style="left:1117.46px;top:305px;width:140.54px;height:19px;line-height:19px;text-align:right;padding-right:2.16px;transform-origin:100% 0;">83 343 908.43</div>
<div class="sc p" style="left:1248.46px;top:305px;width:140.54px;height:19px;line-height:19px;text-align:right;padding-right:2.16px;transform-origin:100% 0;">0.00</div>
<div class="sc p" style="left:17px;top:325px;width:34.59px;height:19px;line-height:19px;text-align:left;padding-left:3.24px;transform-origin:0 0;">378</div>
<div class="sc p" style="left:98px;top:325px;width:308.11px;height:19px;line-height:19px;text-align:left;padding-left:3.24px;transform-origin:0 0;">DIFERENTE DE PRET LA MARFURI</div>
<div class="sc p" style="left:375.16px;top:325px;width:117.84px;height:19px;line-height:19px;text-align:right;padding-right:2.16px;transform-origin:100% 0;">50.00</div>
<div class="sc p" style="left:485.16px;top:325px;width:117.84px;height:19px;line-height:19px;text-align:right;padding-right:2.16px;transform-origin:100% 0;">16 969.63</div>
<div class="sc p" style="left:593.46px;top:325px;width:140.54px;height:19px;line-height:19px;text-align:right;padding-right:2.16px;transform-origin:100% 0;">1 690.89</div>
<div class="sc p" style="left:724.46px;top:325px;width:140.54px;height:19px;line-height:19px;text-align:right;padding-right:2.16px;transform-origin:100% 0;">1 565.77</div>
<div class="sc p" style="left:855.46px;top:325px;width:140.54px;height:19px;line-height:19px;text-align:right;padding-right:2.16px;transform-origin:100% 0;">1 740.89</div>
<div class="sc p" style="left:986.46px;top:325px;width:140.54px;height:19px;line-height:19px;text-align:right;padding-right:2.16px;transform-origin:100% 0;">18 535.40</div>
<div class="sc p" style="left:1117.46px;top:325px;width:140.54px;height:19px;line-height:19px;text-align:right;padding-right:2.16px;transform-origin:100% 0;">0.00</div>
<div class="sc p" style="left:1248.46px;top:325px;width:140.54px;height:19px;line-height:19px;text-align:right;padding-right:2.16px;transform-origin:100% 0;">16 794.51</div>
<div class="sc " style="left:17px;top:345px;width:34.59px;height:19px;line-height:19px;text-align:left;padding-left:3.24px;transform-origin:0 0;">391</div>
<div class="sc " style="left:98px;top:345px;width:308.11px;height:19px;line-height:19px;text-align:left;padding-left:3.24px;transform-origin:0 0;">PROVIZIOANE PENTRU DEPRECIEREA</div>
<div class="sc " style="left:375.16px;top:345px;width:117.84px;height:19px;line-height:19px;text-align:right;padding-right:2.16px;transform-origin:100% 0;">0.00</div>
<div class="sc " style="left:485.16px;top:345px;width:117.84px;height:19px;line-height:19px;text-align:right;padding-right:2.16px;transform-origin:100% 0;">100.00</div>
<div class="sc " style="left:593.46px;top:345px;width:140.54px;height:19px;line-height:19px;text-align:right;padding-right:2.16px;transform-origin:100% 0;">0.00</div>
<div class="sc " style="left:724.46px;top:345px;width:140.54px;height:19px;line-height:19px;text-align:right;padding-right:2.16px;transform-origin:100% 0;">0.00</div>
<div class="sc " style="left:855.46px;top:345px;width:140.54px;height:19px;line-height:19px;text-align:right;padding-right:2.16px;transform-origin:100% 0;">0.00</div>
<div class="sc " style="left:986.46px;top:345px;width:140.54px;height:19px;line-height:19px;text-align:right;padding-right:2.16px;transform-origin:100% 0;">100.00</div>
<div class="sc " style="left:1117.46px;top:345px;width:140.54px;height:19px;line-height:19px;text-align:right;padding-right:2.16px;transform-origin:100% 0;">0.00</div>
<div class="sc " style="left:1248.46px;top:345px;width:140.54px;height:19px;line-height:19px;text-align:right;padding-right:2.16px;transform-origin:100% 0;">100.00</div>
<div class="sc p" style="left:17px;top:365px;width:34.59px;height:19px;line-height:19px;text-align:left;padding-left:3.24px;transform-origin:0 0;">401</div>
<div class="sc p" style="left:98px;top:365px;width:308.11px;height:19px;line-height:19px;text-align:left;padding-left:3.24px;transform-origin:0 0;">FURNIZORI</div>
<div class="sc p" style="left:375.16px;top:365px;width:117.84px;height:19px;line-height:19px;text-align:right;padding-right:2.16px;transform-origin:100% 0;">293.94</div>
<div class="sc p" style="left:485.16px;top:365px;width:117.84px;height:19px;line-height:19px;text-align:right;padding-right:2.16px;transform-origin:100% 0;">391 044.31</div>
<div class="sc p" style="left:593.46px;top:365px;width:140.54px;height:19px;line-height:19px;text-align:right;padding-right:2.16px;transform-origin:100% 0;">0.00</div>
<div class="sc p" style="left:724.46px;top:365px;width:140.54px;height:19px;line-height:19px;text-align:right;padding-right:2.16px;transform-origin:100% 0;">71 548.03</div>
<div class="sc p" style="left:855.46px;top:365px;width:140.54px;height:19px;line-height:19px;text-align:right;padding-right:2.16px;transform-origin:100% 0;">293.94</div>
<div class="sc p" style="left:986.46px;top:365px;width:140.54px;height:19px;line-height:19px;text-align:right;padding-right:2.16px;transform-origin:100% 0;">462 592.34</div>
<div class="sc p" style="left:1117.46px;top:365px;width:140.54px;height:19px;line-height:19px;text-align:right;padding-right:2.16px;transform-origin:100% 0;">0.00</div>
<div class="sc p" style="left:1248.46px;top:365px;width:140.54px;height:19px;line-height:19px;text-align:right;padding-right:2.16px;transform-origin:100% 0;">462 298.40</div>
<div class="sc " style="left:17px;top:385px;width:34.59px;height:19px;line-height:19px;text-align:left;padding-left:3.24px;transform-origin:0 0;">403</div>
<div class="sc " style="left:98px;top:385px;width:308.11px;height:19px;line-height:19px;text-align:left;padding-left:3.24px;transform-origin:0 0;">EFECTE DE PLATIT</div>
<div class="sc " style="left:375.16px;top:385px;width:117.84px;height:19px;line-height:19px;text-align:right;padding-right:2.16px;transform-origin:100% 0;">0.00</div>
<div class="sc " style="left:485.16px;top:385px;width:117.84px;height:19px;line-height:19px;text-align:right;padding-right:2.16px;transform-origin:100% 0;">119.00</div>
<div class="sc " style="left:593.46px;top:385px;width:140.54px;height:19px;line-height:19px;text-align:right;padding-right:2.16px;transform-origin:100% 0;">0.00</div>
<div class="sc " style="left:724.46px;top:385px;width:140.54px;height:19px;line-height:19px;text-align:right;padding-right:2.16px;transform-origin:100% 0;">0.00</div>
<div class="sc " style="left:855.46px;top:385px;width:140.54px;height:19px;line-height:19px;text-align:right;padding-right:2.16px;transform-origin:100% 0;">0.00</div>
<div class="sc " style="left:986.46px;top:385px;width:140.54px;height:19px;line-height:19px;text-align:right;padding-right:2.16px;transform-origin:100% 0;">119.00</div>
<div class="sc " style="left:1117.46px;top:385px;width:140.54px;height:19px;line-height:19px;text-align:right;padding-right:2.16px;transform-origin:100% 0;">0.00</div>
<div class="sc " style="left:1248.46px;top:385px;width:140.54px;height:19px;line-height:19px;text-align:right;padding-right:2.16px;transform-origin:100% 0;">119.00</div>
<div class="sc " style="left:17px;top:405px;width:34.59px;height:19px;line-height:19px;text-align:left;padding-left:3.24px;transform-origin:0 0;">404</div>
<div class="sc " style="left:98px;top:405px;width:308.11px;height:19px;line-height:19px;text-align:left;padding-left:3.24px;transform-origin:0 0;">FURNIZORI DE IMOBILIZARI</div>
<div class="sc " style="left:375.16px;top:405px;width:117.84px;height:19px;line-height:19px;text-align:right;padding-right:2.16px;transform-origin:100% 0;">0.00</div>
<div class="sc " style="left:485.16px;top:405px;width:117.84px;height:19px;line-height:19px;text-align:right;padding-right:2.16px;transform-origin:100% 0;">6 388.00</div>
<div class="sc " style="left:593.46px;top:405px;width:140.54px;height:19px;line-height:19px;text-align:right;padding-right:2.16px;transform-origin:100% 0;">0.00</div>
<div class="sc " style="left:724.46px;top:405px;width:140.54px;height:19px;line-height:19px;text-align:right;padding-right:2.16px;transform-origin:100% 0;">0.00</div>
<div class="sc " style="left:855.46px;top:405px;width:140.54px;height:19px;line-height:19px;text-align:right;padding-right:2.16px;transform-origin:100% 0;">0.00</div>
<div class="sc " style="left:986.46px;top:405px;width:140.54px;height:19px;line-height:19px;text-align:right;padding-right:2.16px;transform-origin:100% 0;">6 388.00</div>
<div class="sc " style="left:1117.46px;top:405px;width:140.54px;height:19px;line-height:19px;text-align:right;padding-right:2.16px;transform-origin:100% 0;">0.00</div>
<div class="sc " style="left:1248.46px;top:405px;width:140.54px;height:19px;line-height:19px;text-align:right;padding-right:2.16px;transform-origin:100% 0;">6 388.00</div>
<div class="sc " style="left:17px;top:425px;width:34.59px;height:19px;line-height:19px;text-align:left;padding-left:3.24px;transform-origin:0 0;">408</div>
<div class="sc " style="left:98px;top:425px;width:308.11px;height:19px;line-height:19px;text-align:left;padding-left:3.24px;transform-origin:0 0;">FURNIZORI - FACTURI NESOSITE</div>
<div class="sc " style="left:375.16px;top:425px;width:117.84px;height:19px;line-height:19px;text-align:right;padding-right:2.16px;transform-origin:100% 0;">0.00</div>
<div class="sc " style="left:485.16px;top:425px;width:117.84px;height:19px;line-height:19px;text-align:right;padding-right:2.16px;transform-origin:100% 0;">1 676.00</div>
<div class="sc " style="left:593.46px;top:425px;width:140.54px;height:19px;line-height:19px;text-align:right;padding-right:2.16px;transform-origin:100% 0;">0.00</div>
<div class="sc " style="left:724.46px;top:425px;width:140.54px;height:19px;line-height:19px;text-align:right;padding-right:2.16px;transform-origin:100% 0;">0.00</div>
<div class="sc " style="left:855.46px;top:425px;width:140.54px;height:19px;line-height:19px;text-align:right;padding-right:2.16px;transform-origin:100% 0;">0.00</div>
<div class="sc " style="left:986.46px;top:425px;width:140.54px;height:19px;line-height:19px;text-align:right;padding-right:2.16px;transform-origin:100% 0;">1 676.00</div>
<div class="sc " style="left:1117.46px;top:425px;width:140.54px;height:19px;line-height:19px;text-align:right;padding-right:2.16px;transform-origin:100% 0;">0.00</div>
<div class="sc " style="left:1248.46px;top:425px;width:140.54px;height:19px;line-height:19px;text-align:right;padding-right:2.16px;transform-origin:100% 0;">1 676.00</div>
<div class="sc " style="left:17px;top:445px;width:34.59px;height:19px;line-height:19px;text-align:left;padding-left:3.24px;transform-origin:0 0;">4091</div>
<div class="sc " style="left:98px;top:445px;width:308.11px;height:19px;line-height:19px;text-align:left;padding-left:3.24px;transform-origin:0 0;">FURNIZORI DEBITORI PENTRU CUMP</div>
<div class="sc " style="left:375.16px;top:445px;width:117.84px;height:19px;line-height:19px;text-align:right;padding-right:2.16px;transform-origin:100% 0;">0.00</div>
<div class="sc " style="left:485.16px;top:445px;width:117.84px;height:19px;line-height:19px;text-align:right;padding-right:2.16px;transform-origin:100% 0;">0.00</div>
<div class="sc " style="left:593.46px;top:445px;width:140.54px;height:19px;line-height:19px;text-align:right;padding-right:2.16px;transform-origin:100% 0;">250.00</div>
<div class="sc " style="left:724.46px;top:445px;width:140.54px;height:19px;line-height:19px;text-align:right;padding-right:2.16px;transform-origin:100% 0;">0.00</div>
<div class="sc " style="left:855.46px;top:445px;width:140.54px;height:19px;line-height:19px;text-align:right;padding-right:2.16px;transform-origin:100% 0;">250.00</div>
<div class="sc " style="left:986.46px;top:445px;width:140.54px;height:19px;line-height:19px;text-align:right;padding-right:2.16px;transform-origin:100% 0;">0.00</div>
<div class="sc " style="left:1117.46px;top:445px;width:140.54px;height:19px;line-height:19px;text-align:right;padding-right:2.16px;transform-origin:100% 0;">250.00</div>
<div class="sc " style="left:1248.46px;top:445px;width:140.54px;height:19px;line-height:19px;text-align:right;padding-right:2.16px;transform-origin:100% 0;">0.00</div>
<div class="sc " style="left:17px;top:465px;width:34.59px;height:19px;line-height:19px;text-align:left;padding-left:3.24px;transform-origin:0 0;">4092</div>
<div class="sc " style="left:98px;top:465px;width:308.11px;height:19px;line-height:19px;text-align:left;padding-left:3.24px;transform-origin:0 0;">FURNIZORI DEBITORI PENTRU PRES</div>
<div class="sc " style="left:375.16px;top:465px;width:117.84px;height:19px;line-height:19px;text-align:right;padding-right:2.16px;transform-origin:100% 0;">230.00</div>
<div class="sc " style="left:485.16px;top:465px;width:117.84px;height:19px;line-height:19px;text-align:right;padding-right:2.16px;transform-origin:100% 0;">0.00</div>
<div class="sc " style="left:593.46px;top:465px;width:140.54px;height:19px;line-height:19px;text-align:right;padding-right:2.16px;transform-origin:100% 0;">0.00</div>
<div class="sc " style="left:724.46px;top:465px;width:140.54px;height:19px;line-height:19px;text-align:right;padding-right:2.16px;transform-origin:100% 0;">0.00</div>
<div class="sc " style="left:855.46px;top:465px;width:140.54px;height:19px;line-height:19px;text-align:right;padding-right:2.16px;transform-origin:100% 0;">230.00</div>
<div class="sc " style="left:986.46px;top:465px;width:140.54px;height:19px;line-height:19px;text-align:right;padding-right:2.16px;transform-origin:100% 0;">0.00</div>
<div class="sc " style="left:1117.46px;top:465px;width:140.54px;height:19px;line-height:19px;text-align:right;padding-right:2.16px;transform-origin:100% 0;">230.00</div>
<div class="sc " style="left:1248.46px;top:465px;width:140.54px;height:19px;line-height:19px;text-align:right;padding-right:2.16px;transform-origin:100% 0;">0.00</div>
<div class="sc p" style="left:17px;top:485px;width:34.59px;height:19px;line-height:19px;text-align:left;padding-left:3.24px;transform-origin:0 0;">4111</div>
<div class="sc p" style="left:98px;top:485px;width:308.11px;height:19px;line-height:19px;text-align:left;padding-left:3.24px;transform-origin:0 0;">CLIENTI</div>
<div class="sc p" style="left:375.16px;top:485px;width:117.84px;height:19px;line-height:19px;text-align:right;padding-right:2.16px;transform-origin:100% 0;">1 218 748.80</div>
<div class="sc p" style="left:485.16px;top:485px;width:117.84px;height:19px;line-height:19px;text-align:right;padding-right:2.16px;transform-origin:100% 0;">100.00</div>
<div class="sc p" style="left:593.46px;top:485px;width:140.54px;height:19px;line-height:19px;text-align:right;padding-right:2.16px;transform-origin:100% 0;">11 920.70</div>
<div class="sc p" style="left:724.46px;top:485px;width:140.54px;height:19px;line-height:19px;text-align:right;padding-right:2.16px;transform-origin:100% 0;">87.57</div>
<div class="sc p" style="left:855.46px;top:485px;width:140.54px;height:19px;line-height:19px;text-align:right;padding-right:2.16px;transform-origin:100% 0;">1 230 669.50</div>
<div class="sc p" style="left:986.46px;top:485px;width:140.54px;height:19px;line-height:19px;text-align:right;padding-right:2.16px;transform-origin:100% 0;">187.57</div>
<div class="sc p" style="left:1117.46px;top:485px;width:140.54px;height:19px;line-height:19px;text-align:right;padding-right:2.16px;transform-origin:100% 0;">1 230 481.93</div>
<div class="sc p" style="left:1248.46px;top:485px;width:140.54px;height:19px;line-height:19px;text-align:right;padding-right:2.16px;transform-origin:100% 0;">0.00</div>
<div class="sc " style="left:17px;top:505px;width:34.59px;height:19px;line-height:19px;text-align:left;padding-left:3.24px;transform-origin:0 0;">411</div>
<div class="sc " style="left:98px;top:505px;width:308.11px;height:19px;line-height:19px;text-align:left;padding-left:3.24px;transform-origin:0 0;">CLIENTI</div>
<div class="sc " style="left:375.16px;top:505px;width:117.84px;height:19px;line-height:19px;text-align:right;padding-right:2.16px;transform-origin:100% 0;">1 299.85</div>
<div class="sc " style="left:485.16px;top:505px;width:117.84px;height:19px;line-height:19px;text-align:right;padding-right:2.16px;transform-origin:100% 0;">0.00</div>
<div class="sc " style="left:593.46px;top:505px;width:140.54px;height:19px;line-height:19px;text-align:right;padding-right:2.16px;transform-origin:100% 0;">0.00</div>
<div class="sc " style="left:724.46px;top:505px;width:140.54px;height:19px;line-height:19px;text-align:right;padding-right:2.16px;transform-origin:100% 0;">0.00</div>
<div class="sc " style="left:855.46px;top:505px;width:140.54px;height:19px;line-height:19px;text-align:right;padding-right:2.16px;transform-origin:100% 0;">1 299.85</div>
<div class="sc " style="left:986.46px;top:505px;width:140.54px;height:19px;line-height:19px;text-align:right;padding-right:2.16px;transform-origin:100% 0;">0.00</div>
<div class="sc " style="left:1117.46px;top:505px;width:140.54px;height:19px;line-height:19px;text-align:right;padding-right:2.16px;transform-origin:100% 0;">1 299.85</div>
<div class="sc " style="left:1248.46px;top:505px;width:140.54px;height:19px;line-height:19px;text-align:right;padding-right:2.16px;transform-origin:100% 0;">0.00</div>
<div class="sc " style="left:17px;top:525px;width:34.59px;height:19px;line-height:19px;text-align:left;padding-left:3.24px;transform-origin:0 0;">413</div>
<div class="sc " style="left:98px;top:525px;width:308.11px;height:19px;line-height:19px;text-align:left;padding-left:3.24px;transform-origin:0 0;">EFECTE DE PRIMIT</div>
<div class="sc " style="left:375.16px;top:525px;width:117.84px;height:19px;line-height:19px;text-align:right;padding-right:2.16px;transform-origin:100% 0;">119.00</div>
<div class="sc " style="left:485.16px;top:525px;width:117.84px;height:19px;line-height:19px;text-align:right;padding-right:2.16px;transform-origin:100% 0;">0.00</div>
<div class="sc " style="left:593.46px;top:525px;width:140.54px;height:19px;line-height:19px;text-align:right;padding-right:2.16px;transform-origin:100% 0;">0.00</div>
<div class="sc " style="left:724.46px;top:525px;width:140.54px;height:19px;line-height:19px;text-align:right;padding-right:2.16px;transform-origin:100% 0;">0.00</div>
<div class="sc " style="left:855.46px;top:525px;width:140.54px;height:19px;line-height:19px;text-align:right;padding-right:2.16px;transform-origin:100% 0;">119.00</div>
<div class="sc " style="left:986.46px;top:525px;width:140.54px;height:19px;line-height:19px;text-align:right;padding-right:2.16px;transform-origin:100% 0;">0.00</div>
<div class="sc " style="left:1117.46px;top:525px;width:140.54px;height:19px;line-height:19px;text-align:right;padding-right:2.16px;transform-origin:100% 0;">119.00</div>
<div class="sc " style="left:1248.46px;top:525px;width:140.54px;height:19px;line-height:19px;text-align:right;padding-right:2.16px;transform-origin:100% 0;">0.00</div>
<div class="sc " style="left:17px;top:545px;width:34.59px;height:19px;line-height:19px;text-align:left;padding-left:3.24px;transform-origin:0 0;">418</div>
<div class="sc " style="left:98px;top:545px;width:308.11px;height:19px;line-height:19px;text-align:left;padding-left:3.24px;transform-origin:0 0;">CLIENTI - FACTURI DE INTOCMIT</div>
<div class="sc " style="left:375.16px;top:545px;width:117.84px;height:19px;line-height:19px;text-align:right;padding-right:2.16px;transform-origin:100% 0;">14 285.14</div>
<div class="sc " style="left:485.16px;top:545px;width:117.84px;height:19px;line-height:19px;text-align:right;padding-right:2.16px;transform-origin:100% 0;">0.00</div>
<div class="sc " style="left:593.46px;top:545px;width:140.54px;height:19px;line-height:19px;text-align:right;padding-right:2.16px;transform-origin:100% 0;">0.00</div>
<div class="sc " style="left:724.46px;top:545px;width:140.54px;height:19px;line-height:19px;text-align:right;padding-right:2.16px;transform-origin:100% 0;">0.00</div>
<div class="sc " style="left:855.46px;top:545px;width:140.54px;height:19px;line-height:19px;text-align:right;padding-right:2.16px;transform-origin:100% 0;">14 285.14</div>
<div class="sc " style="left:986.46px;top:545px;width:140.54px;height:19px;line-height:19px;text-align:right;padding-right:2.16px;transform-origin:100% 0;">0.00</div>
<div class="sc " style="left:1117.46px;top:545px;width:140.54px;height:19px;line-height:19px;text-align:right;padding-right:2.16px;transform-origin:100% 0;">14 285.14</div>
<div class="sc " style="left:1248.46px;top:545px;width:140.54px;height:19px;line-height:19px;text-align:right;padding-right:2.16px;transform-origin:100% 0;">0.00</div>
<div class="sc " style="left:17px;top:565px;width:34.59px;height:19px;line-height:19px;text-align:left;padding-left:3.24px;transform-origin:0 0;">419</div>
<div class="sc " style="left:98px;top:565px;width:308.11px;height:19px;line-height:19px;text-align:left;padding-left:3.24px;transform-origin:0 0;">CLIENTI - CREDITORI</div>
<div class="sc " style="left:375.16px;top:565px;width:117.84px;height:19px;line-height:19px;text-align:right;padding-right:2.16px;transform-origin:100% 0;">0.00</div>
<div class="sc " style="left:485.16px;top:565px;width:117.84px;height:19px;line-height:19px;text-align:right;padding-right:2.16px;transform-origin:100% 0;">4 690.00</div>
<div class="sc " style="left:593.46px;top:565px;width:140.54px;height:19px;line-height:19px;text-align:right;padding-right:2.16px;transform-origin:100% 0;">-40.00</div>
<div class="sc " style="left:724.46px;top:565px;width:140.54px;height:19px;line-height:19px;text-align:right;padding-right:2.16px;transform-origin:100% 0;">-40.00</div>
<div class="sc " style="left:855.46px;top:565px;width:140.54px;height:19px;line-height:19px;text-align:right;padding-right:2.16px;transform-origin:100% 0;">-40.00</div>
<div class="sc " style="left:986.46px;top:565px;width:140.54px;height:19px;line-height:19px;text-align:right;padding-right:2.16px;transform-origin:100% 0;">4 650.00</div>
<div class="sc " style="left:1117.46px;top:565px;width:140.54px;height:19px;line-height:19px;text-align:right;padding-right:2.16px;transform-origin:100% 0;">0.00</div>
<div class="sc " style="left:1248.46px;top:565px;width:140.54px;height:19px;line-height:19px;text-align:right;padding-right:2.16px;transform-origin:100% 0;">4 690.00</div>
<div class="sc " style="left:17px;top:585px;width:34.59px;height:19px;line-height:19px;text-align:left;padding-left:3.24px;transform-origin:0 0;">421</div>
<div class="sc " style="left:98px;top:585px;width:308.11px;height:19px;line-height:19px;text-align:left;padding-left:3.24px;transform-origin:0 0;">PERSONAL - SALARII DATORATE</div>
<div class="sc " style="left:375.16px;top:585px;width:117.84px;height:19px;line-height:19px;text-align:right;padding-right:2.16px;transform-origin:100% 0;">0.00</div>
<div class="sc " style="left:485.16px;top:585px;width:117.84px;height:19px;line-height:19px;text-align:right;padding-right:2.16px;transform-origin:100% 0;">97 603.00</div>
<div class="sc " style="left:593.46px;top:585px;width:140.54px;height:19px;line-height:19px;text-align:right;padding-right:2.16px;transform-origin:100% 0;">0.00</div>
<div class="sc " style="left:724.46px;top:585px;width:140.54px;height:19px;line-height:19px;text-align:right;padding-right:2.16px;transform-origin:100% 0;">0.00</div>
<div class="sc " style="left:855.46px;top:585px;width:140.54px;height:19px;line-height:19px;text-align:right;padding-right:2.16px;transform-origin:100% 0;">0.00</div>
<div class="sc " style="left:986.46px;top:585px;width:140.54px;height:19px;line-height:19px;text-align:right;padding-right:2.16px;transform-origin:100% 0;">97 603.00</div>
<div class="sc " style="left:1117.46px;top:585px;width:140.54px;height:19px;line-height:19px;text-align:right;padding-right:2.16px;transform-origin:100% 0;">0.00</div>
<div class="sc " style="left:1248.46px;top:585px;width:140.54px;height:19px;line-height:19px;text-align:right;padding-right:2.16px;transform-origin:100% 0;">97 603.00</div>
<div class="sc " style="left:17px;top:605px;width:34.59px;height:19px;line-height:19px;text-align:left;padding-left:3.24px;transform-origin:0 0;">425</div>
<div class="sc " style="left:98px;top:605px;width:308.11px;height:19px;line-height:19px;text-align:left;padding-left:3.24px;transform-origin:0 0;">AVANSURI ACORDATE PERSONALULUI</div>
<div class="sc " style="left:375.16px;top:605px;width:117.84px;height:19px;line-height:19px;text-align:right;padding-right:2.16px;transform-origin:100% 0;">0.00</div>
<div class="sc " style="left:485.16px;top:605px;width:117.84px;height:19px;line-height:19px;text-align:right;padding-right:2.16px;transform-origin:100% 0;">504 928.00</div>
<div class="sc " style="left:593.46px;top:605px;width:140.54px;height:19px;line-height:19px;text-align:right;padding-right:2.16px;transform-origin:100% 0;">0.00</div>
<div class="sc " style="left:724.46px;top:605px;width:140.54px;height:19px;line-height:19px;text-align:right;padding-right:2.16px;transform-origin:100% 0;">0.00</div>
<div class="sc " style="left:855.46px;top:605px;width:140.54px;height:19px;line-height:19px;text-align:right;padding-right:2.16px;transform-origin:100% 0;">0.00</div>
<div class="sc " style="left:986.46px;top:605px;width:140.54px;height:19px;line-height:19px;text-align:right;padding-right:2.16px;transform-origin:100% 0;">504 928.00</div>
<div class="sc " style="left:1117.46px;top:605px;width:140.54px;height:19px;line-height:19px;text-align:right;padding-right:2.16px;transform-origin:100% 0;">0.00</div>
<div class="sc " style="left:1248.46px;top:605px;width:140.54px;height:19px;line-height:19px;text-align:right;padding-right:2.16px;transform-origin:100% 0;">504 928.00</div>
<div class="sc " style="left:17px;top:625px;width:34.59px;height:19px;line-height:19px;text-align:left;padding-left:3.24px;transform-origin:0 0;">4281</div>
<div class="sc " style="left:98px;top:625px;width:308.11px;height:19px;line-height:19px;text-align:left;padding-left:3.24px;transform-origin:0 0;">ALTE DATORII IN LEGATURA CU PE</div>
<div class="sc " style="left:375.16px;top:625px;width:117.84px;height:19px;line-height:19px;text-align:right;padding-right:2.16px;transform-origin:100% 0;">495.00</div>
<div class="sc " style="left:485.16px;top:625px;width:117.84px;height:19px;line-height:19px;text-align:right;padding-right:2.16px;transform-origin:100% 0;">0.00</div>
<div class="sc " style="left:593.46px;top:625px;width:140.54px;height:19px;line-height:19px;text-align:right;padding-right:2.16px;transform-origin:100% 0;">0.00</div>
<div class="sc " style="left:724.46px;top:625px;width:140.54px;height:19px;line-height:19px;text-align:right;padding-right:2.16px;transform-origin:100% 0;">0.00</div>
<div class="sc " style="left:855.46px;top:625px;width:140.54px;height:19px;line-height:19px;text-align:right;padding-right:2.16px;transform-origin:100% 0;">495.00</div>
<div class="sc " style="left:986.46px;top:625px;width:140.54px;height:19px;line-height:19px;text-align:right;padding-right:2.16px;transform-origin:100% 0;">0.00</div>
<div class="sc " style="left:1117.46px;top:625px;width:140.54px;height:19px;line-height:19px;text-align:right;padding-right:2.16px;transform-origin:100% 0;">495.00</div>
<div class="sc " style="left:1248.46px;top:625px;width:140.54px;height:19px;line-height:19px;text-align:right;padding-right:2.16px;transform-origin:100% 0;">0.00</div>
<div class="sc " style="left:17px;top:645px;width:34.59px;height:19px;line-height:19px;text-align:left;padding-left:3.24px;transform-origin:0 0;">4282</div>
<div class="sc " style="left:98px;top:645px;width:308.11px;height:19px;line-height:19px;text-align:left;padding-left:3.24px;transform-origin:0 0;">ALTE CREANTE IN LEGATURA CU PE</div>
<div class="sc " style="left:375.16px;top:645px;width:117.84px;height:19px;line-height:19px;text-align:right;padding-right:2.16px;transform-origin:100% 0;">30.90</div>
<div class="sc " style="left:485.16px;top:645px;width:117.84px;height:19px;line-height:19px;text-align:right;padding-right:2.16px;transform-origin:100% 0;">0.00</div>
<div class="sc " style="left:593.46px;top:645px;width:140.54px;height:19px;line-height:19px;text-align:right;padding-right:2.16px;transform-origin:100% 0;">0.00</div>
<div class="sc " style="left:724.46px;top:645px;width:140.54px;height:19px;line-height:19px;text-align:right;padding-right:2.16px;transform-origin:100% 0;">0.00</div>
<div class="sc " style="left:855.46px;top:645px;width:140.54px;height:19px;line-height:19px;text-align:right;padding-right:2.16px;transform-origin:100% 0;">30.90</div>
<div class="sc " style="left:986.46px;top:645px;width:140.54px;height:19px;line-height:19px;text-align:right;padding-right:2.16px;transform-origin:100% 0;">0.00</div>
<div class="sc " style="left:1117.46px;top:645px;width:140.54px;height:19px;line-height:19px;text-align:right;padding-right:2.16px;transform-origin:100% 0;">30.90</div>
<div class="sc " style="left:1248.46px;top:645px;width:140.54px;height:19px;line-height:19px;text-align:right;padding-right:2.16px;transform-origin:100% 0;">0.00</div>
<div class="sc " style="left:17px;top:665px;width:34.59px;height:19px;line-height:19px;text-align:left;padding-left:3.24px;transform-origin:0 0;">4315</div>
<div class="sc " style="left:98px;top:665px;width:308.11px;height:19px;line-height:19px;text-align:left;padding-left:3.24px;transform-origin:0 0;">CONTRIBUTIA DE ASIGURARI SOCIALE</div>
<div class="sc " style="left:375.16px;top:665px;width:117.84px;height:19px;line-height:19px;text-align:right;padding-right:2.16px;transform-origin:100% 0;">0.00</div>
<div class="sc " style="left:485.16px;top:665px;width:117.84px;height:19px;line-height:19px;text-align:right;padding-right:2.16px;transform-origin:100% 0;">258 399.00</div>
<div class="sc " style="left:593.46px;top:665px;width:140.54px;height:19px;line-height:19px;text-align:right;padding-right:2.16px;transform-origin:100% 0;">0.00</div>
<div class="sc " style="left:724.46px;top:665px;width:140.54px;height:19px;line-height:19px;text-align:right;padding-right:2.16px;transform-origin:100% 0;">0.00</div>
<div class="sc " style="left:855.46px;top:665px;width:140.54px;height:19px;line-height:19px;text-align:right;padding-right:2.16px;transform-origin:100% 0;">0.00</div>
<div class="sc " style="left:986.46px;top:665px;width:140.54px;height:19px;line-height:19px;text-align:right;padding-right:2.16px;transform-origin:100% 0;">258 399.00</div>
<div class="sc " style="left:1117.46px;top:665px;width:140.54px;height:19px;line-height:19px;text-align:right;padding-right:2.16px;transform-origin:100% 0;">0.00</div>
<div class="sc " style="left:1248.46px;top:665px;width:140.54px;height:19px;line-height:19px;text-align:right;padding-right:2.16px;transform-origin:100% 0;">258 399.00</div>
<div class="sc " style="left:17px;top:685px;width:34.59px;height:19px;line-height:19px;text-align:left;padding-left:3.24px;transform-origin:0 0;">4316</div>
<div class="sc " style="left:98px;top:685px;width:308.11px;height:19px;line-height:19px;text-align:left;padding-left:3.24px;transform-origin:0 0;">CONTRIBUTIA DE ASIGURARI SOCIALE DE SANATATE</div>
<div class="sc " style="left:375.16px;top:685px;width:117.84px;height:19px;line-height:19px;text-align:right;padding-right:2.16px;transform-origin:100% 0;">0.00</div>
<div class="sc " style="left:485.16px;top:685px;width:117.84px;height:19px;line-height:19px;text-align:right;padding-right:2.16px;transform-origin:100% 0;">103 224.00</div>
<div class="sc " style="left:593.46px;top:685px;width:140.54px;height:19px;line-height:19px;text-align:right;padding-right:2.16px;transform-origin:100% 0;">0.00</div>
<div class="sc " style="left:724.46px;top:685px;width:140.54px;height:19px;line-height:19px;text-align:right;padding-right:2.16px;transform-origin:100% 0;">0.00</div>
<div class="sc " style="left:855.46px;top:685px;width:140.54px;height:19px;line-height:19px;text-align:right;padding-right:2.16px;transform-origin:100% 0;">0.00</div>
<div class="sc " style="left:986.46px;top:685px;width:140.54px;height:19px;line-height:19px;text-align:right;padding-right:2.16px;transform-origin:100% 0;">103 224.00</div>
<div class="sc " style="left:1117.46px;top:685px;width:140.54px;height:19px;line-height:19px;text-align:right;padding-right:2.16px;transform-origin:100% 0;">0.00</div>
<div class="sc " style="left:1248.46px;top:685px;width:140.54px;height:19px;line-height:19px;text-align:right;padding-right:2.16px;transform-origin:100% 0;">103 224.00</div>
<div class="sc " style="left:17px;top:705px;width:34.59px;height:19px;line-height:19px;text-align:left;padding-left:3.24px;transform-origin:0 0;">436</div>
<div class="sc " style="left:98px;top:705px;width:308.11px;height:19px;line-height:19px;text-align:left;padding-left:3.24px;transform-origin:0 0;">CONTRIBUTIA ASIGURATORIE PENTRU MUNCA</div>
<div class="sc " style="left:375.16px;top:705px;width:117.84px;height:19px;line-height:19px;text-align:right;padding-right:2.16px;transform-origin:100% 0;">0.00</div>
<div class="sc " style="left:485.16px;top:705px;width:117.84px;height:19px;line-height:19px;text-align:right;padding-right:2.16px;transform-origin:100% 0;">23 091.00</div>
<div class="sc " style="left:593.46px;top:705px;width:140.54px;height:19px;line-height:19px;text-align:right;padding-right:2.16px;transform-origin:100% 0;">0.00</div>
<div class="sc " style="left:724.46px;top:705px;width:140.54px;height:19px;line-height:19px;text-align:right;padding-right:2.16px;transform-origin:100% 0;">0.00</div>
<div class="sc " style="left:855.46px;top:705px;width:140.54px;height:19px;line-height:19px;text-align:right;padding-right:2.16px;transform-origin:100% 0;">0.00</div>
<div class="sc " style="left:986.46px;top:705px;width:140.54px;height:19px;line-height:19px;text-align:right;padding-right:2.16px;transform-origin:100% 0;">23 091.00</div>
<div class="sc " style="left:1117.46px;top:705px;width:140.54px;height:19px;line-height:19px;text-align:right;padding-right:2.16px;transform-origin:100% 0;">0.00</div>
<div class="sc " style="left:1248.46px;top:705px;width:140.54px;height:19px;line-height:19px;text-align:right;padding-right:2.16px;transform-origin:100% 0;">23 091.00</div>
<div class="sc " style="left:17px;top:725px;width:34.59px;height:19px;line-height:19px;text-align:left;padding-left:3.24px;transform-origin:0 0;">4418</div>
<div class="sc " style="left:98px;top:725px;width:308.11px;height:19px;line-height:19px;text-align:left;padding-left:3.24px;transform-origin:0 0;">IMPOZITUL PE VENIT</div>
<div class="sc " style="left:375.16px;top:725px;width:117.84px;height:19px;line-height:19px;text-align:right;padding-right:2.16px;transform-origin:100% 0;">112.00</div>
<div class="sc " style="left:485.16px;top:725px;width:117.84px;height:19px;line-height:19px;text-align:right;padding-right:2.16px;transform-origin:100% 0;">0.00</div>
<div class="sc " style="left:593.46px;top:725px;width:140.54px;height:19px;line-height:19px;text-align:right;padding-right:2.16px;transform-origin:100% 0;">0.00</div>
<div class="sc " style="left:724.46px;top:725px;width:140.54px;height:19px;line-height:19px;text-align:right;padding-right:2.16px;transform-origin:100% 0;">0.00</div>
<div class="sc " style="left:855.46px;top:725px;width:140.54px;height:19px;line-height:19px;text-align:right;padding-right:2.16px;transform-origin:100% 0;">112.00</div>
<div class="sc " style="left:986.46px;top:725px;width:140.54px;height:19px;line-height:19px;text-align:right;padding-right:2.16px;transform-origin:100% 0;">0.00</div>
<div class="sc " style="left:1117.46px;top:725px;width:140.54px;height:19px;line-height:19px;text-align:right;padding-right:2.16px;transform-origin:100% 0;">112.00</div>
<div class="sc " style="left:1248.46px;top:725px;width:140.54px;height:19px;line-height:19px;text-align:right;padding-right:2.16px;transform-origin:100% 0;">0.00</div>
<div class="sc " style="left:17px;top:745px;width:34.59px;height:18px;line-height:19px;text-align:left;padding-left:3.24px;transform-origin:0 0;">4423</div>
<div class="sc " style="left:98px;top:745px;width:308.11px;height:18px;line-height:19px;text-align:left;padding-left:3.24px;transform-origin:0 0;">TVA DE PLATA</div>
<div class="sc " style="left:375.16px;top:745px;width:117.84px;height:18px;line-height:19px;text-align:right;padding-right:2.16px;transform-origin:100% 0;">102.00</div>
<div class="sc " style="left:485.16px;top:745px;width:117.84px;height:18px;line-height:19px;text-align:right;padding-right:2.16px;transform-origin:100% 0;">0.00</div>
<div class="sc " style="left:593.46px;top:745px;width:140.54px;height:18px;line-height:19px;text-align:right;padding-right:2.16px;transform-origin:100% 0;">0.00</div>
<div class="sc " style="left:724.46px;top:745px;width:140.54px;height:18px;line-height:19px;text-align:right;padding-right:2.16px;transform-origin:100% 0;">0.00</div>
<div class="sc " style="left:855.46px;top:745px;width:140.54px;height:18px;line-height:19px;text-align:right;padding-right:2.16px;transform-origin:100% 0;">102.00</div>
<div class="sc " style="left:986.46px;top:745px;width:140.54px;height:18px;line-height:19px;text-align:right;padding-right:2.16px;transform-origin:100% 0;">0.00</div>
<div class="sc " style="left:1117.46px;top:745px;width:140.54px;height:18px;line-height:19px;text-align:right;padding-right:2.16px;transform-origin:100% 0;">102.00</div>
<div class="sc " style="left:1248.46px;top:745px;width:140.54px;height:18px;line-height:19px;text-align:right;padding-right:2.16px;transform-origin:100% 0;">0.00</div>
<div class="a" style="left:1396px;top:246px;width:16px;height:517px;background:#f0f0f0"></div>
<div class="a" style="left:1403px;top:333px;width:2px;height:25px;background:#858585"></div>
<div class="a" style="left:7px;top:763px;width:1406px;height:17px;background:#f0f0f0"></div>
<div class="a" style="left:8px;top:763px;width:4px;height:16px;background:#000"></div>
<div class="a" style="left:29px;top:771px;width:337px;height:2px;background:#858585"></div>
<svg class="a" style="left:1397px;top:764px" width="14" height="14" viewBox="0 0 14 14">
<rect x="0.6" y="0.6" width="12.8" height="12.8" rx="1.8" fill="#e8e4f4" stroke="#1a8cff" stroke-width="1.2"/>
<rect x="1" y="1" width="12" height="2.2" fill="#1a8cff"/>
<line x1="1.5" y1="2" x2="12.5" y2="2" stroke="#fff" stroke-width="0.6"/>
<circle cx="7.3" cy="7.2" r="3.1" fill="#a8dcf8" stroke="#505860" stroke-width="1.1"/>
<line x1="9.6" y1="9.6" x2="12.6" y2="12.6" stroke="#f08a30" stroke-width="2"/>
</svg>
</body></html>
